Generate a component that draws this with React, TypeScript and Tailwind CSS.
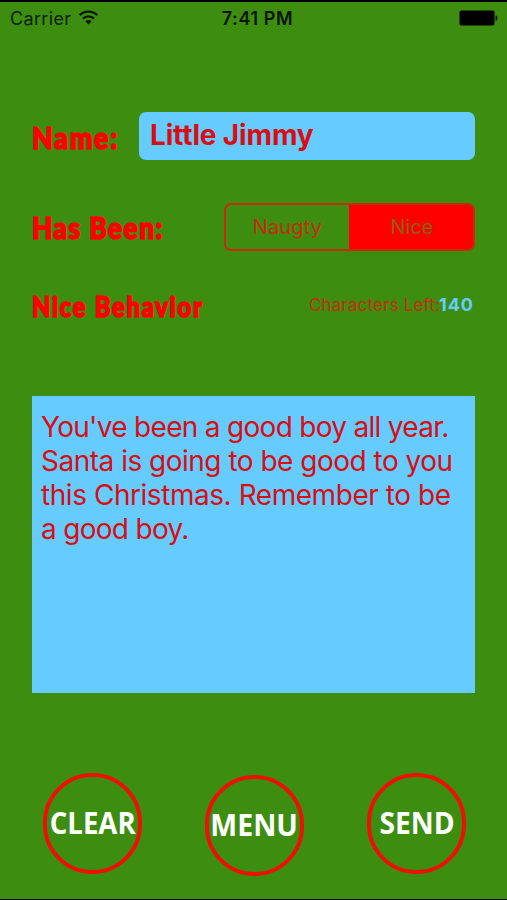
import React, { useState } from "react";

const labelClass =
  "block origin-left whitespace-nowrap font-['Lato'] font-black text-[#ff0000] [-webkit-text-stroke:1.6px_#ff0000]";

const circleClass =
  "flex h-[101px] w-[99px] items-center justify-center rounded-full border-4 border-[#ee1005] pb-[2px]";

function StatusBar() {
  return (
    <header className="grid h-9 grid-cols-3 items-center border-t-2 border-black pb-[2px] pl-[10px] pr-[9px] text-[18px] text-[#0c2103]">
      <div className="flex items-center gap-[7px]">
        <span className="tracking-[0.35px]">Carrier</span>
        <svg className="-mt-[2px]" width="21" height="15" viewBox="0 0 20 15" fill="none">
          <path d="M1.2 5.2a12.6 12.6 0 0 1 17.6 0" stroke="#0a1a02" strokeWidth="2.4" />
          <path d="M4.5 8.6a7.9 7.9 0 0 1 11 0" stroke="#0a1a02" strokeWidth="2.4" />
          <path d="M10 14.6 6.8 11.2a4.6 4.6 0 0 1 6.4 0Z" fill="#0a1a02" />
        </svg>
      </div>
      <span className="whitespace-nowrap pl-[7px] text-center font-semibold tracking-[0.6px] text-[#081502]">
        7:41 PM
      </span>
      <svg className="justify-self-end" width="39" height="16" viewBox="0 0 39 16">
        <rect x="0.5" y="0.5" width="35" height="15" rx="1.8" fill="#000" />
        <path d="M36.6 5.2c2.4.6 2.4 5 0 5.6Z" fill="#000" />
      </svg>
    </header>
  );
}

export default function App() {
  const [behavior, setBehavior] = useState("Nice");

  return (
    <div className="flex h-[900px] w-[507px] flex-col overflow-hidden border-b border-black bg-[#3d8e10] font-['Inter',sans-serif]">
      <StatusBar />

      <main className="flex flex-col pl-[32px] pr-[32px] pt-[75px]">
        <div className="flex h-[49px] items-center justify-between">
          <span className={`${labelClass} w-[86px] scale-x-[0.87] pt-[4px] text-[31px] tracking-[1.9px]`}>
            Name:
          </span>
          <div className="flex h-[48px] w-[336px] items-center rounded-[7px] bg-[#66ccff] pb-[2px] pl-[11px] text-[28px] font-bold tracking-[-0.15px] text-[#d90d14]">
            Little Jimmy
          </div>
        </div>

        <div className="mt-[43px] flex h-[48px] items-center justify-between">
          <span className={`${labelClass} w-[130px] scale-x-[0.85] text-[31px] tracking-[1.7px]`}>
            Has Been:
          </span>
          <div className="flex h-[48px] w-[251px] overflow-hidden rounded-[7px] border-2 border-[#c52c09] bg-[#3d8e10] text-[20px]">
            <button
              className="w-[123px] pb-0 tracking-[0.15px] text-[#c52c09]"
              onClick={() => setBehavior("Naugty")}
            >
              Naugty
            </button>
            <button
              className="-my-[2px] -mr-[2px] flex-1 bg-[#ff0000] text-[#8d600b]"
              onClick={() => setBehavior("Nice")}
            >
              Nice
            </button>
          </div>
        </div>

        <div className="mt-[35px] flex h-[40px] items-center justify-between">
          <span className={`${labelClass} w-[170px] scale-x-[0.85] text-[28px] tracking-[2px]`}>
            {behavior} Behavior
          </span>
          <p className="flex items-baseline whitespace-nowrap pb-[2px] text-[17px] text-[#c52c09]">
            <span className="w-[130px] tracking-[0.15px]">Characters Left:</span>
            <span className="w-[36px] text-[18px] font-bold tracking-[0.9px] text-[#66ccff]">140</span>
          </p>
        </div>

        <div className="mt-[70px] h-[297px] bg-[#66ccff] px-[9px] pt-[14px] text-[28px] leading-[34px] text-[#d90d14]">
          <p className="whitespace-nowrap">
            <span className="tracking-[-0.7px]">You've been a good boy all year.</span>
            <br />
            <span className="tracking-[-0.5px]">Santa is going to be good to you</span>
            <br />
            <span className="tracking-[-0.45px]">this Christmas. Remember to be</span>
            <br />
            <span className="tracking-[-0.7px]">a good boy.</span>
          </p>
        </div>
      </main>

      <footer className="mt-[80px] flex items-start justify-between pl-[43px] pr-[41px] font-['Open_Sans',sans-serif] text-[30px] font-bold text-white">
        <button className={circleClass}>
          <span className="scale-x-[0.92]">CLEAR</span>
        </button>
        <button className={`${circleClass} mt-[2px]`}>
          <span className="scale-x-[0.95]">MENU</span>
        </button>
        <button className={circleClass}>
          <span className="scale-x-[0.94]">SEND</span>
        </button>
      </footer>
    </div>
  );
}
